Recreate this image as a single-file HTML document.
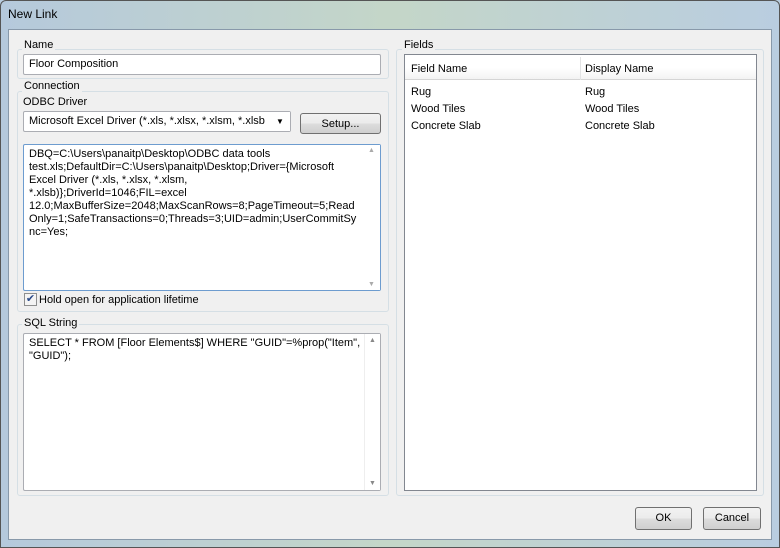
<!DOCTYPE html>
<html><head><style>
*{box-sizing:border-box;margin:0;padding:0}
body{width:780px;height:548px;overflow:hidden;font-family:"Liberation Sans",sans-serif;font-size:11px;color:#000;background:#b9cde0;position:relative}
.frame{position:absolute;left:0;top:0;width:780px;height:548px;background:linear-gradient(90deg,#b5c9dc,#c4d6c8 50%,#b9cde0);border:1px solid #555;border-radius:6px 6px 0 0}
.title{position:absolute;left:8px;top:7px;font-size:12px}
.client{position:absolute;left:8px;top:29px;width:764px;height:511px;background:#f0f0f0;border:1px solid #8899aa}
.a{position:absolute}
.grp{position:absolute;border:1px solid #d5dfe5;border-radius:3px}
.lbl{position:absolute;background:#f0f0f0;padding:0 2px}
.inp{position:absolute;background:#fff;border:1px solid #abadb3;border-radius:2px}
.btn{position:absolute;border:1px solid #707070;border-radius:3px;background:linear-gradient(#f2f2f2,#ebebeb 50%,#dddddd 51%,#cfcfcf);text-align:center;line-height:20px}
.sb{position:absolute;right:0;top:0;bottom:0;width:16px;background:#fff}
.ln{position:absolute;left:5px;white-space:nowrap;line-height:13px}
</style></head><body>
<div class="frame"></div>
<div class="title">New Link</div>
<div class="client"></div>
<div class="grp" style="left:17px;top:49px;width:372px;height:30px"></div>
<div class="lbl" style="left:22px;top:39px">Name</div>
<div class="inp" style="left:23px;top:54px;width:358px;height:21px"><span class="a" style="left:5px;top:3px">Floor Composition</span></div>

<div class="grp" style="left:17px;top:91px;width:372px;height:221px"></div>
<div class="lbl" style="left:22px;top:80px">Connection</div>
<div class="a" style="left:23px;top:96px">ODBC Driver</div>
<div class="inp" style="left:23px;top:111px;width:268px;height:21px"><span class="a" style="left:5px;top:3px;white-space:nowrap">Microsoft Excel Driver (*.xls, *.xlsx, *.xlsm, *.xlsb</span><span class="a" style="right:0;top:0;width:20px;height:19px;background:#fff;font-size:8px;text-align:center;line-height:19px">▼</span></div>
<div class="btn" style="left:300px;top:113px;width:81px;height:21px">Setup...</div>
<div class="inp" style="left:23px;top:144px;width:358px;height:147px;border-color:#6d9ccf">
<div class="ln" style="top:3px">DBQ=C:\Users\panaitp\Desktop\ODBC data tools<br>test.xls;DefaultDir=C:\Users\panaitp\Desktop;Driver={Microsoft<br>Excel Driver (*.xls, *.xlsx, *.xlsm,<br>*.xlsb)};DriverId=1046;FIL=excel<br>12.0;MaxBufferSize=2048;MaxScanRows=8;PageTimeout=5;Read<br>Only=1;SafeTransactions=0;Threads=3;UID=admin;UserCommitSy<br>nc=Yes;</div>
<div class="sb"><span class="a" style="left:4px;top:2px;color:#aaa;font-size:7px">▲</span><span class="a" style="left:4px;bottom:2px;color:#aaa;font-size:7px">▼</span></div></div>
<div class="a" style="left:24px;top:293px;width:13px;height:13px;border:1px solid #8e8f8f;background:#f4f4f4;font-size:11px;line-height:11px;text-align:center;color:#2a4a8a">✔</div>
<div class="a" style="left:39px;top:294px">Hold open for application lifetime</div>

<div class="grp" style="left:17px;top:324px;width:372px;height:172px"></div>
<div class="lbl" style="left:22px;top:317px">SQL String</div>
<div class="inp" style="left:23px;top:333px;width:358px;height:158px">
<div class="ln" style="top:3px">SELECT * FROM [Floor Elements$] WHERE "GUID"=%prop("Item",<br>"GUID");</div>
<div class="sb" style="border-left:1px solid #eee"><span class="a" style="left:4px;top:3px;color:#888;font-size:7px">▲</span><span class="a" style="left:4px;bottom:3px;color:#888;font-size:7px">▼</span></div></div>

<div class="grp" style="left:396px;top:49px;width:368px;height:447px"></div>
<div class="lbl" style="left:402px;top:39px">Fields</div>
<div class="inp" style="left:404px;top:54px;width:353px;height:437px;border-color:#828790;border-radius:0">
<div class="a" style="left:0;top:2px;width:351px;height:23px;background:linear-gradient(#fff,#fff 50%,#f3f3f3);border-bottom:1px solid #d5d5d5"></div>
<div class="a" style="left:175px;top:2px;width:1px;height:23px;background:#e2e3e4"></div>
<div class="a" style="left:6px;top:8px">Field Name</div>
<div class="a" style="left:180px;top:8px">Display Name</div>
<div class="a" style="left:6px;top:29px;line-height:17px">Rug<br>Wood Tiles<br>Concrete Slab</div>
<div class="a" style="left:180px;top:29px;line-height:17px">Rug<br>Wood Tiles<br>Concrete Slab</div>
</div>
<div class="btn" style="left:635px;top:507px;width:57px;height:23px">OK</div>
<div class="btn" style="left:703px;top:507px;width:58px;height:23px">Cancel</div>
</body></html>
